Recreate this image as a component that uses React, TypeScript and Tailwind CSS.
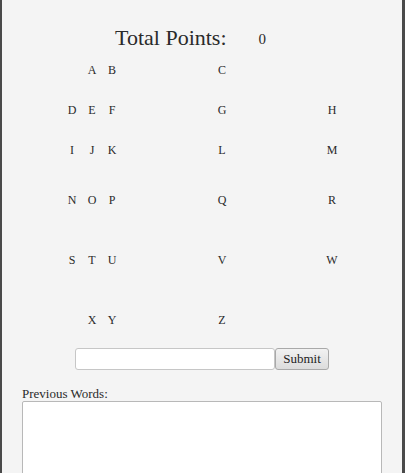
import React from "react";

const rows: { h: string; cells: (string | null)[] }[] = [
  { h: "h-[40px]", cells: [null, "A", "B", "C", null] },
  { h: "h-[40px]", cells: ["D", "E", "F", "G", "H"] },
  { h: "h-[40px]", cells: ["I", "J", "K", "L", "M"] },
  { h: "h-[60px]", cells: ["N", "O", "P", "Q", "R"] },
  { h: "h-[60px]", cells: ["S", "T", "U", "V", "W"] },
  { h: "h-[58px] pt-[2px]", cells: [null, "X", "Y", "Z", null] },
];

function Cell({ v, className = "" }: { v: string | null; className?: string }) {
  return <div className={`w-[20px] flex-none text-center ${className}`}>{v ?? ""}</div>;
}

export default function App() {
  return (
    <div
      className="min-h-[473px] h-[473px] overflow-hidden bg-[#4a4a4a] pl-[2px] pr-[3px] text-[#2a2a2a]"
      style={{ fontFamily: '"Liberation Serif", serif' }}
    >
      <div className="h-full bg-[#f4f4f4]">
        <div className="h-[50px] pt-[25px] flex">
          <div className="ml-[113px] text-[22px] leading-[26px]">Total Points:</div>
          <div className="ml-[32px] mt-[5px] text-[15px] leading-[18px]">0</div>
        </div>
        {rows.map((r, i) => (
          <div key={i} className={`${r.h} flex items-center pl-[60px] text-[12px] leading-[14px]`}>
            <Cell v={r.cells[0]} />
            <Cell v={r.cells[1]} />
            <Cell v={r.cells[2]} />
            <Cell v={r.cells[3]} className="ml-[90px]" />
            <Cell v={r.cells[4]} className="ml-[90px]" />
          </div>
        ))}
        <div className="flex pl-[73px]">
          <input
            type="text"
            className="w-[200px] h-[22px] bg-white border border-[#c6c6c6] rounded-[3px] outline-none"
          />
          <button className="w-[54px] h-[22px] border border-[#a9a9a9] rounded-[3px] bg-gradient-to-b from-[#f2f2f2] to-[#dcdcdc] text-[13px] leading-[16px] text-[#222]">
            Submit
          </button>
        </div>
        <div className="pl-[20px] pt-[16px] text-[13px] leading-[15px]">Previous Words:</div>
        <textarea className="ml-[20px] block w-[360px] h-[100px] bg-white border border-[#b8b8b8] rounded-[2px] resize-none outline-none" />
      </div>
    </div>
  );
}
